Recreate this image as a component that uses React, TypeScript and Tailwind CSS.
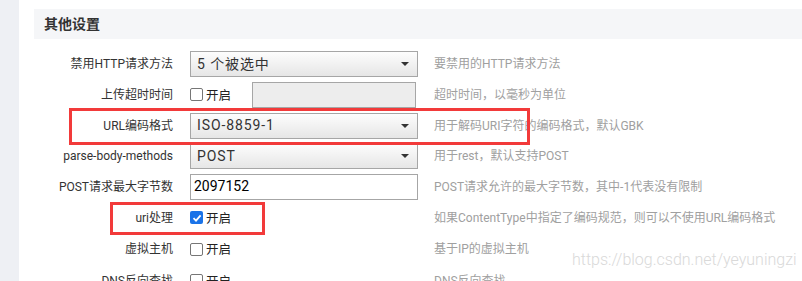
import React from "react";

const font = { fontFamily: 'Roboto, "Noto Sans CJK SC", sans-serif' };

function Select({ value }: { value: string }) {
  return (
    <div className="flex h-[26px] w-[228px] items-center justify-between border border-[#a6a6a6] bg-gradient-to-b from-[#fdfdfd] to-[#e6e6e6] pl-[6px] pr-[8px] text-[14px] text-[#333] tracking-[0.9px]">
      <span>{value}</span>
      <span className="h-0 w-0 border-x-[4px] border-t-[4px] border-x-transparent border-t-[#333]" />
    </div>
  );
}

function Check({ checked }: { checked?: boolean }) {
  return (
    <div className="flex items-center">
      {checked ? (
        <span className="flex h-[13px] w-[13px] items-center justify-center rounded-[2px] bg-[#1a73e8]">
          <svg width="10" height="10" viewBox="0 0 10 10">
            <path d="M1.5 5.2 L4 7.6 L8.6 2.4" stroke="#fff" strokeWidth="1.8" fill="none" />
          </svg>
        </span>
      ) : (
        <span className="h-[13px] w-[13px] rounded-[2px] border border-[#767676] bg-white" />
      )}
      <span className="ml-[3px] mt-[3px] text-[12.5px] text-[#222]">开启</span>
    </div>
  );
}

function Row({ h, label, children, help }: { h: string; label: string; children: React.ReactNode; help: string }) {
  return (
    <div className={`flex items-center ${h}`}>
      <div className="w-[154px] shrink-0 whitespace-nowrap text-right text-[12px] text-[#333]">{label}</div>
      <div className="ml-[17px] flex w-[228px] shrink-0 items-center">{children}</div>
      <div className="ml-[16px] whitespace-nowrap text-[12px] text-[#a0a0a0]">{help}</div>
    </div>
  );
}

export default function App() {
  return (
    <div className="relative flex h-[281px] w-[802px] overflow-hidden bg-white" style={font}>
      <div className="w-[19px] shrink-0 bg-[#eef0f4]" />
      <div className="min-w-0 flex-1">
        <div className="ml-[15px] mt-[9px] flex h-[30px] items-center bg-[#f5f6f8] pl-[10px] text-[14px] font-bold text-[#333]">
          其他设置
        </div>
        <div className="mt-[10px] flex flex-col">
          <Row h="h-[30px]" label="禁用HTTP请求方法" help="要禁用的HTTP请求方法">
            <Select value="5 个被选中" />
          </Row>
          <Row h="h-[31px]" label="上传超时时间" help="超时时间，以毫秒为单位">
            <Check />
            <div className="ml-[21px] h-[26px] w-[164px] border border-[#a6a6a6] bg-[#ededed]" />
          </Row>
          <Row h="h-[31px]" label="URL编码格式" help="用于解码URI字符的编码格式，默认GBK">
            <Select value="ISO-8859-1" />
          </Row>
          <Row h="h-[30px]" label="parse-body-methods" help="用于rest，默认支持POST">
            <Select value="POST" />
          </Row>
          <Row h="h-[31px]" label="POST请求最大字节数" help="POST请求允许的最大字节数，其中-1代表没有限制">
            <div className="flex h-[26px] w-[228px] items-center border border-[#a6a6a6] bg-white pl-[3px] text-[14px] text-black">
              2097152
            </div>
          </Row>
          <Row h="h-[31px]" label="uri处理" help="如果ContentType中指定了编码规范，则可以不使用URL编码格式">
            <Check checked />
          </Row>
          <Row h="h-[32px]" label="虚拟主机" help="基于IP的虚拟主机">
            <Check />
          </Row>
          <Row h="h-[31px]" label="DNS反向查找" help="DNS反向查找">
            <Check />
          </Row>
        </div>
      </div>
      <div className="absolute left-[69px] top-[108px] h-[37px] w-[461px] border-[3px] border-[#f23a3a]" />
      <div className="absolute left-[110px] top-[202px] h-[33px] w-[155px] border-[3px] border-[#f23a3a]" />
      <div className="absolute left-[572px] top-[248px] whitespace-nowrap text-[16px] font-light text-[#d9d9d9]">https://blog.csdn.net/yeyuningzi</div>
    </div>
  );
}
